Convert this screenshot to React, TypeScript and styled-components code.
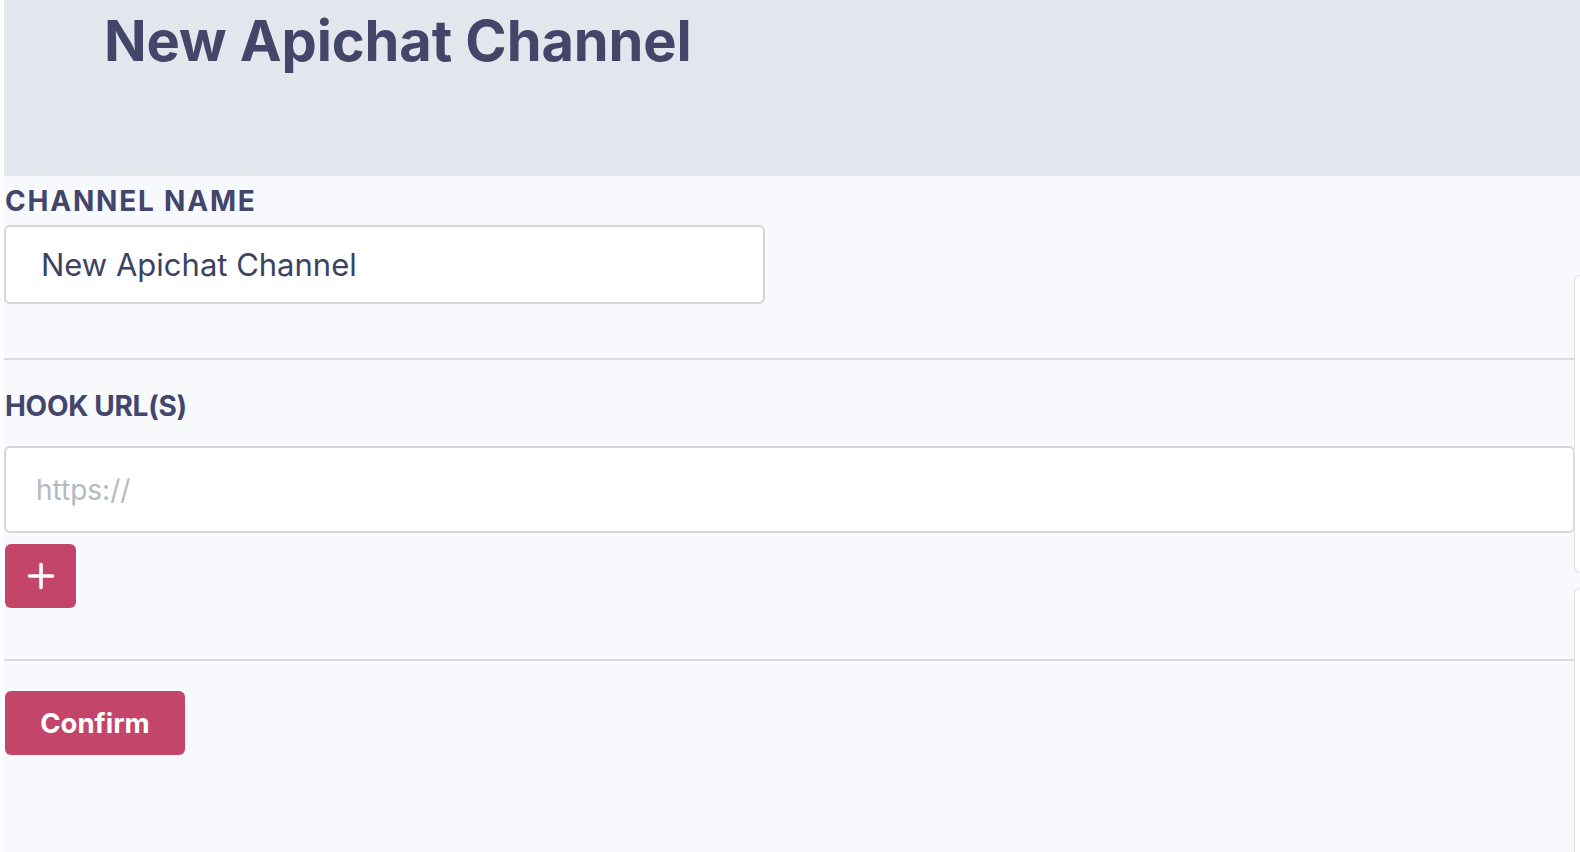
import styled, { createGlobalStyle } from "styled-components";

const GlobalStyle = createGlobalStyle`
  html, body {
    margin: 0;
    padding: 0;
    background: #ffffff;
  }
  * {
    box-sizing: border-box;
  }
`;

const Page = styled.div`
  display: flex;
  flex-direction: column;
  min-height: 852px;
  padding-left: 4px;
  background: #ffffff;
  font-family: Inter, "Liberation Sans", sans-serif;
  overflow: hidden;
`;

const Header = styled.header`
  height: 176px;
  padding: 9px 0 0 100px;
  background: #e3e6ec;
`;

const Title = styled.h1`
  margin: 0;
  font-size: 56px;
  font-weight: 700;
  line-height: 64px;
  letter-spacing: -0.1px;
  color: #434669;
`;

const Body = styled.div`
  display: flex;
  flex: 1;
`;

const Main = styled.main`
  width: 1570px;
  flex-shrink: 0;
  padding-top: 9px;
  background: #f7f9fd;
`;

const Side = styled.aside`
  display: flex;
  flex: 1;
  flex-direction: column;
  gap: 15px;
  padding-top: 99px;
  background: #f7f9fd;
`;

const SideCard = styled.div<{ $h: number }>`
  height: ${(p) => p.$h}px;
  border: 1px solid #e0e3e8;
  border-right: none;
  border-radius: 8px 0 0 8px;
  background: #ffffff;
`;

const Label = styled.label<{ $spacing?: number }>`
  display: block;
  margin-left: 1px;
  font-size: 28px;
  font-weight: 700;
  line-height: 32px;
  letter-spacing: ${(p) => p.$spacing ?? 0}px;
  color: #42466a;
  text-transform: uppercase;
`;

const Field = styled.input<{ $w: string; $h: number; $size: number; $pad: number; $top: number }>`
  display: block;
  width: ${(p) => p.$w};
  height: ${(p) => p.$h}px;
  margin-top: ${(p) => p.$top}px;
  padding: 0 0 0 ${(p) => p.$pad}px;
  border: 2px solid #d4d6da;
  border-radius: 6px;
  background: #ffffff;
  font-family: Inter, "Liberation Sans", sans-serif;
  font-size: ${(p) => p.$size}px;
  color: #3b4262;
  outline: none;
  &::placeholder {
    color: #b2b9c3;
  }
`;

const Divider = styled.hr<{ $top: number }>`
  margin: ${(p) => p.$top}px 0 0;
  border: none;
  border-top: 2px solid #d9dbdf;
`;

const Section = styled.div`
  padding-top: 30px;
`;

const Button = styled.button<{ $w: number; $top: number }>`
  display: flex;
  align-items: center;
  justify-content: center;
  width: ${(p) => p.$w}px;
  height: 64px;
  margin: ${(p) => p.$top}px 0 0 1px;
  padding: 0;
  border: none;
  border-radius: 6px;
  background: #c4456a;
  color: #ffffff;
  font-family: Inter, "Liberation Sans", sans-serif;
  font-size: 27.5px;
  font-weight: 700;
  cursor: pointer;
`;

function PlusIcon() {
  return (
    <svg width="28" height="28" viewBox="0 0 28 28" fill="none">
      <path d="M14 2.5v23M2.5 14h23" stroke="#ffffff" strokeWidth="3.6" strokeLinecap="round" />
    </svg>
  );
}

export default function App() {
  return (
    <>
      <GlobalStyle />
      <Page>
        <Header>
          <Title>New Apichat Channel</Title>
        </Header>
        <Body>
          <Main>
            <Label htmlFor="channel-name" $spacing={1.8}>Channel Name</Label>
            <Field
              id="channel-name"
              $w="761px"
              $h={79}
              $size={31}
              $pad={35}
              $top={8}
              defaultValue="New Apichat Channel"
            />
            <Divider $top={54} />
            <Section>
              <Label htmlFor="hook-url" $spacing={-0.3}>Hook URL(s)</Label>
              <Field
                id="hook-url"
                $w="1571px"
                $h={87}
                $size={28}
                $pad={30}
                $top={24}
                placeholder="https://"
              />
            </Section>
            <Button type="button" $w={71} $top={11} aria-label="Add hook URL">
              <PlusIcon />
            </Button>
            <Divider $top={51} />
            <Button type="button" $w={180} $top={30}>
              Confirm
            </Button>
          </Main>
          <Side>
            <SideCard $h={298} />
            <SideCard $h={300} />
          </Side>
        </Body>
      </Page>
    </>
  );
}
